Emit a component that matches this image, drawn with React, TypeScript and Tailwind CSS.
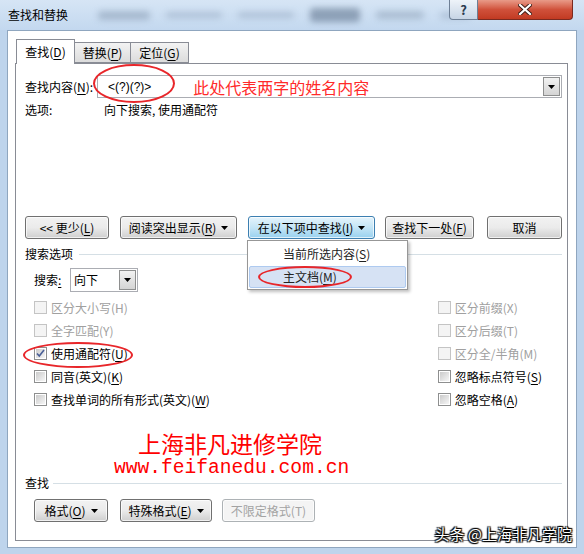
import React from "react";

const cjk = "font-['Microsoft_YaHei','Noto_Sans_CJK_SC','Noto_Sans',sans-serif]";

function Arrow({ className = "" }: { className?: string }) {
  return (
    <svg width="7" height="4" viewBox="0 0 7 4" className={className}>
      <path d="M0 0h7L3.5 4z" fill="#000" />
    </svg>
  );
}

function Key({ children }: { children: React.ReactNode }) {
  return <span className="underline underline-offset-2">{children}</span>;
}

function Btn({
  children,
  className = "",
  menu = false,
  disabled = false,
  hot = false,
}: {
  children: React.ReactNode;
  className?: string;
  menu?: boolean;
  disabled?: boolean;
  hot?: boolean;
}) {
  const skin = hot
    ? "border-[#3c7fb1] bg-gradient-to-b from-[#e5f4fc] via-[#c4e5f6] to-[#98d1ef] text-black"
    : disabled
    ? "border-[#adb2b5] bg-[#f4f4f4] text-[#a3a3a3]"
    : "border-[#707070] bg-gradient-to-b from-[#f2f2f2] via-[#ebebeb] to-[#cfcfcf] text-black";
  return (
    <div
      className={`flex h-[23px] items-center justify-center gap-[5px] rounded-[3px] border text-[12px] shadow-[inset_0_0_0_1px_rgba(255,255,255,0.7)] ${skin} ${className}`}
    >
      <span>{children}</span>
      {menu ? <Arrow /> : null}
    </div>
  );
}

function Check({
  label,
  checked = false,
  disabled = false,
}: {
  label: React.ReactNode;
  checked?: boolean;
  disabled?: boolean;
}) {
  return (
    <div className={`flex h-[23px] items-center gap-[4px] text-[12px] ${disabled ? "text-[#a0a0a0]" : "text-black"}`}>
      <div
        className={`relative h-[13px] w-[13px] border ${
          disabled ? "border-[#c4c4c4] bg-[#f4f4f4]" : "border-[#8e8f8f] bg-white"
        } p-[1px]`}
      >
        <div
          className={`h-full w-full ${
            disabled ? "bg-[#f4f4f4]" : "bg-gradient-to-br from-[#cbcbcb] to-[#f6f6f6]"
          }`}
        />
        {checked ? (
          <svg viewBox="0 0 11 11" className="absolute left-[0px] top-[0px] h-[11px] w-[11px]">
            <path d="M2 5.5l2.3 2.6L9 2" fill="none" stroke="#4a5f97" strokeWidth="1.6" />
          </svg>
        ) : null}
      </div>
      <span>{label}</span>
    </div>
  );
}

function Ellipse({ className }: { className: string }) {
  return <div className={`pointer-events-none absolute rounded-[50%] border-2 border-[#e8262a] ${className}`} />;
}

export default function App() {
  return (
    <div className={`relative flex h-[554px] w-[584px] flex-col overflow-hidden bg-[#bed4ec] ${cjk}`}>
      {/* title bar */}
      <div className="relative flex h-[30px] shrink-0 items-center bg-gradient-to-b from-[#d6e5f5] to-[#c3d8ef] pl-[8px]">
        <span className="text-[12px] text-black">查找和替换</span>
        {/* blurred ribbon styles behind the glass */}
        <div className="ml-[30px] flex items-center gap-[16px] blur-[3px]">
          <div className="h-[9px] w-[52px] rounded-sm bg-[#8296ae]/50" />
          <div className="h-[6px] w-[56px] rounded-sm bg-[#8296ae]/40" />
          <div className="h-[6px] w-[56px] rounded-sm bg-[#8296ae]/40" />
          <div className="h-[14px] w-[50px] rounded-sm bg-[#5a6d86]/55" />
          <div className="h-[8px] w-[48px] rounded-sm bg-[#8296ae]/45" />
          <div className="h-[7px] w-[30px] rounded-sm bg-[#8296ae]/35" />
        </div>
        <div className="absolute right-[11px] top-0 flex">
          <div className="flex h-[20px] w-[29px] items-center justify-center rounded-bl-[4px] border border-t-0 border-[#6d7f95] bg-gradient-to-b from-[#eef3f9] to-[#c7d5e5] text-[13px] font-bold text-[#2a3a4e]">
            ?
          </div>
          <div className="flex h-[20px] w-[95px] items-center justify-center rounded-br-[4px] border border-l-0 border-t-0 border-[#7a2a20] bg-gradient-to-b from-[#e89a88] via-[#d0513b] to-[#c23a22]">
            <svg width="14" height="11" viewBox="0 0 14 11">
              <path d="M2 1l10 9M12 1L2 10" stroke="#3a1a14" strokeWidth="4" strokeLinecap="square" />
              <path d="M2 1l10 9M12 1L2 10" stroke="#fff" strokeWidth="2.2" strokeLinecap="square" />
            </svg>
          </div>
        </div>
      </div>

      {/* client area */}
      <div className="mx-[7px] mb-[6px] flex flex-1 flex-col border border-[#8fa6bf] bg-white pl-[7px] pr-[8px] pt-[8px]">
        {/* tabs */}
        <div className="flex h-[24px] items-end pl-[1px] text-[12px]">
          <div className="relative z-10 -mb-[1px] flex h-[25px] w-[59px] items-center justify-center border border-b-0 border-[#898c95] bg-white">
            查找(<Key>D</Key>)
          </div>
          <div className="flex h-[21px] w-[56px] items-center justify-center border border-l-0 border-[#898c95] bg-gradient-to-b from-[#f3f3f3] to-[#dcdcdc]">
            替换(<Key>P</Key>)
          </div>
          <div className="flex h-[21px] w-[58px] items-center justify-center border border-l-0 border-[#898c95] bg-gradient-to-b from-[#f3f3f3] to-[#dcdcdc]">
            定位(<Key>G</Key>)
          </div>
        </div>

        {/* panel */}
        <div className="mb-[6px] flex flex-1 flex-col border border-[#898c95] pl-[9px] pr-[5px] text-[12px] text-black">
          <div className="mt-[11px] flex items-center">
            <span className="w-[72px]">查找内容(<Key>N</Key>):</span>
            <div className="flex h-[23px] flex-1 items-center border border-[#abadb3] pl-[10px]">
              <span className="font-['Liberation_Sans',sans-serif] text-[12px]">&lt;(?)(?)&gt;</span>
              <span className="ml-[42px] text-[16px] text-[#ff2a2a]">此处代表两字的姓名内容</span>
              <div className="ml-auto mr-[1px] flex h-[19px] w-[17px] items-center justify-center border border-[#8e8f8f] bg-gradient-to-b from-[#f2f2f2] to-[#d4d4d4]">
                <Arrow />
              </div>
            </div>
          </div>
          <div className="mt-[2px] flex h-[20px] items-center">
            <span className="w-[79px]">选项:</span>
            <span>向下搜索, 使用通配符</span>
          </div>

          <div className="mt-[96px] flex items-center">
            <Btn className="w-[84px]">&lt;&lt; 更少(<Key>L</Key>)</Btn>
            <Btn className="ml-[11px] w-[117px]" menu>
              阅读突出显示(<Key>R</Key>)
            </Btn>
            <Btn className="ml-[11px] w-[127px]" menu hot>
              在以下项中查找(<Key>I</Key>)
            </Btn>
            <Btn className="ml-[10px] w-[89px]">
              查找下一处(<Key>F</Key>)
            </Btn>
            <Btn className="ml-[13px] w-[75px]">取消</Btn>
          </div>

          <div className="mt-[6px] flex h-[18px] items-center">
            <span>搜索选项</span>
            <div className="ml-[6px] h-px flex-1 bg-[#d5dfe5]" />
          </div>

          <div className="mt-[5px] flex items-center pl-[9px]">
            <span className="w-[36px]">搜索<Key>:</Key></span>
            <div className="flex h-[24px] w-[68px] items-center border border-[#abadb3] pl-[3px]">
              <span>向下</span>
              <div className="ml-auto mr-[1px] flex h-[20px] w-[17px] items-center justify-center border border-[#8e8f8f] bg-gradient-to-b from-[#f2f2f2] to-[#d4d4d4]">
                <Arrow />
              </div>
            </div>
          </div>

          <div className="mt-[4px] flex pl-[9px]">
            <div className="flex flex-col">
              <Check label="区分大小写(H)" disabled />
              <Check label="全字匹配(Y)" disabled />
              <Check label={<>使用通配符(<Key>U</Key>)</>} checked />
              <Check label={<>同音(英文)(<Key>K</Key>)</>} />
              <Check label={<>查找单词的所有形式(英文)(<Key>W</Key>)</>} />
            </div>
            <div className="ml-auto mr-[20px] flex flex-col">
              <Check label="区分前缀(X)" disabled />
              <Check label="区分后缀(T)" disabled />
              <Check label="区分全/半角(M)" disabled />
              <Check label={<>忽略标点符号(<Key>S</Key>)</>} />
              <Check label={<>忽略空格(<Key>A</Key>)</>} />
            </div>
          </div>

          <div className="mt-[21px] flex flex-col items-start">
            <span className="ml-[113px] text-[23px] leading-[23px] text-[#ff0000]">上海非凡进修学院</span>
            <span className="ml-[89px] mt-[3px] font-['Liberation_Mono',monospace] text-[19.6px] leading-[20px] text-[#ff0000]">
              www.feifanedu.com.cn
            </span>
          </div>

          <div className="-mt-[3px] flex h-[16px] items-center">
            <span>查找</span>
            <div className="ml-[4px] h-px flex-1 bg-[#d5dfe5]" />
          </div>

          <div className="mt-[8px] flex items-center pl-[9px]">
            <Btn className="w-[74px]" menu>
              格式(<Key>O</Key>)
            </Btn>
            <Btn className="ml-[12px] w-[92px]" menu>
              特殊格式(<Key>E</Key>)
            </Btn>
            <Btn className="ml-[10px] w-[93px]" disabled>
              不限定格式(T)
            </Btn>
          </div>
        </div>
      </div>

      {/* dropdown menu */}
      <div className="absolute left-[247px] top-[240px] flex h-[50px] w-[161px] flex-col border border-[#979797] bg-white p-[1px] text-[12px] shadow-[2px_2px_3px_rgba(0,0,0,0.25)]">
        <div className="flex h-[24px] items-center pl-[34px] text-[#222]">
          当前所选内容(<Key>S</Key>)
        </div>
        <div className="flex h-[22px] items-center rounded-[2px] border border-[#aecaf0] bg-[#d6e2f4] pl-[33px] text-[#222]">
          主文档(<Key>M</Key>)
        </div>
      </div>

      {/* annotations */}
      <Ellipse className="left-[93px] top-[64px] h-[39px] w-[82px]" />
      <Ellipse className="left-[258px] top-[266px] h-[22px] w-[94px]" />
      <Ellipse className="left-[23px] top-[342px] h-[26px] w-[110px]" />

      {/* watermark */}
      <div className="absolute right-[12px] top-[523px] text-[15px] text-white [text-shadow:0_0_1px_#000,1px_1px_1px_#000,-1px_-1px_1px_#000,1px_-1px_1px_#000,-1px_1px_1px_#000]">
        头条 @上海非凡学院
      </div>
    </div>
  );
}
